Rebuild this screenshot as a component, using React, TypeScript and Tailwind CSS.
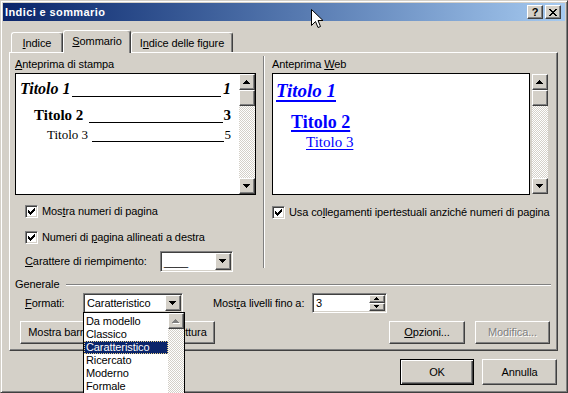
import React from "react"

const raised =
  "bg-[#d4d0c8] border border-t-white border-l-white border-r-[#404040] border-b-[#404040] shadow-[inset_-1px_-1px_#808080]"
const sunken =
  "border border-t-[#808080] border-l-[#808080] border-r-white border-b-white shadow-[inset_1px_1px_#404040,inset_-1px_-1px_#d4d0c8]"
const checker =
  "bg-[image:repeating-conic-gradient(#d4d0c8_0_25%,#ffffff_0_50%)] bg-[length:2px_2px]"

function Arrow({ dir, w = 7, color = "#000", ghost = false }: { dir: "up" | "down"; w?: number; color?: string; ghost?: boolean }) {
  const rows: number[] = []
  for (let x = 1; x <= w; x += 2) rows.push(x)
  const r = dir === "up" ? rows : [...rows].reverse()
  const h = rows.length
  return (
    <svg width={w + 1} height={h + 1} viewBox={`0 0 ${w + 1} ${h + 1}`} shapeRendering="crispEdges">
      {ghost &&
        r.map((rw, i) => <rect key={"g" + i} x={(w - rw) / 2 + 1} y={i + 1} width={rw} height={1} fill="#fff" />)}
      {r.map((rw, i) => (
        <rect key={i} x={(w - rw) / 2} y={i} width={rw} height={1} fill={color} />
      ))}
    </svg>
  )
}

function VScroll({ className = "", thumb = true, upDisabled = false }: { className?: string; thumb?: boolean; upDisabled?: boolean }) {
  return (
    <div className={`flex flex-col w-[16px] shrink-0 ${className}`}>
      <div className={`${raised} h-[16px] shrink-0 flex items-center justify-center`}>
        {upDisabled ? <Arrow dir="up" color="#808080" ghost /> : <Arrow dir="up" />}
      </div>
      {thumb && <div className={`${raised} h-[16px] shrink-0`} />}
      <div className={`flex-1 ${checker}`} />
      <div className={`${raised} h-[16px] shrink-0 flex items-center justify-center`}>
        <Arrow dir="down" />
      </div>
    </div>
  )
}

const checkPixels: [number, number, number][] = [
  [6, 0, 1],
  [5, 1, 2],
  [0, 2, 1],
  [4, 2, 3],
  [0, 3, 2],
  [3, 3, 3],
  [0, 4, 5],
  [1, 5, 3],
  [2, 6, 1],
]

function Check() {
  return (
    <div className={`w-[13px] h-[13px] shrink-0 bg-white ${sunken} flex items-center justify-center`}>
      <svg width="7" height="7" viewBox="0 0 7 7" shapeRendering="crispEdges">
        {checkPixels.map(([x, y, w], i) => (
          <rect key={i} x={x} y={y} width={w} height={1} fill="#000" />
        ))}
      </svg>
    </div>
  )
}

function Combo({ className = "", children }: { className?: string; children: React.ReactNode }) {
  return (
    <div className={`${sunken} bg-white flex p-[1px] shrink-0 ${className}`}>
      <div className="flex-1 pl-[2px] flex items-center whitespace-nowrap">{children}</div>
      <div className={`${raised} w-[16px] flex items-center justify-center`}>
        <Arrow dir="down" />
      </div>
    </div>
  )
}

function Btn({
  className = "",
  children,
  disabled = false,
  isDefault = false,
}: {
  className?: string
  children: React.ReactNode
  disabled?: boolean
  isDefault?: boolean
}) {
  const frame = isDefault
    ? "bg-[#d4d0c8] border border-black shadow-[inset_1px_1px_#fff,inset_-1px_-1px_#404040,inset_-2px_-2px_#808080]"
    : raised
  return (
    <div
      className={`${frame} flex items-center justify-center whitespace-nowrap shrink-0 ${
        disabled ? "text-[#808080] [text-shadow:1px_1px_#fff]" : ""
      } ${className}`}
    >
      {children}
    </div>
  )
}

function Tab({ className = "", active = false, children }: { className?: string; active?: boolean; children: React.ReactNode }) {
  return (
    <div
      className={`${className} bg-[#d4d0c8] flex items-center justify-center rounded-t-[3px] border-t border-l border-r border-t-white border-l-white border-r-[#404040] shadow-[inset_-1px_0_#808080] ${
        active ? "h-[23px] -mb-px pb-[1px]" : "h-[20px] pt-[1px]"
      }`}
    >
      {children}
    </div>
  )
}

function TocRow({
  label,
  num,
  className = "",
  lead = "",
}: {
  label: string
  num: string
  className?: string
  lead?: string
}) {
  return (
    <div className={`flex items-baseline whitespace-nowrap ${className}`}>
      <span>{label}</span>
      <span className={`flex-1 relative top-[3px] border-b border-black ${lead}`} />
      <span>{num}</span>
    </div>
  )
}

const xPixels: [number, number, number][] = [
  [0, 0, 2],
  [6, 0, 2],
  [1, 1, 2],
  [5, 1, 2],
  [2, 2, 4],
  [3, 3, 2],
  [2, 4, 4],
  [1, 5, 2],
  [5, 5, 2],
  [0, 6, 2],
  [6, 6, 2],
]

export default function App() {
  return (
    <div className="relative w-[568px] h-[393px] overflow-hidden bg-[#d4d0c8] font-['Liberation_Sans',Arial,sans-serif] text-[11px] leading-[13px] tracking-[-0.1px] text-black">
      <div className="w-full h-full border border-t-[#d4d0c8] border-l-[#d4d0c8] border-r-[#404040] border-b-[#404040] shadow-[inset_1px_1px_#fff,inset_-1px_-1px_#808080] p-[2px] flex flex-col">
        {/* title bar */}
        <div className="h-[18px] shrink-0 flex items-center bg-gradient-to-r from-[#0a246a] to-[#a6caf0]">
          <span className="pl-[2px] text-white font-bold tracking-[0.4px]">Indici e sommario</span>
          <div className="ml-auto mr-[4px] flex gap-[2px]">
            <div className={`${raised} w-[16px] h-[14px] flex items-center justify-center font-bold text-[11px] leading-none tracking-normal`}>
              ?
            </div>
            <div className={`${raised} w-[16px] h-[14px] flex items-center justify-center`}>
              <svg width="8" height="7" viewBox="0 0 8 7" shapeRendering="crispEdges">
                {xPixels.map(([x, y, w], i) => (
                  <rect key={i} x={x} y={y} width={w} height={1} fill="#000" />
                ))}
              </svg>
            </div>
          </div>
        </div>

        {/* tabs */}
        <div className="mt-[9px] ml-[8px] h-[22px] shrink-0 flex items-end relative z-10">
          <Tab className="w-[52px]">
            <u>I</u>ndice
          </Tab>
          <Tab className="w-[68px]" active>
            <u>S</u>ommario
          </Tab>
          <Tab className="w-[102px]">
            I<u>n</u>dice delle figure
          </Tab>
        </div>

        {/* tab panel */}
        <div className="ml-[6px] w-[549px] h-[299px] shrink-0 border border-t-white border-l-white border-r-[#404040] border-b-[#404040] shadow-[inset_-1px_-1px_#808080]">
          <div className="flex items-start h-[215px] pt-[3px]">
            {/* print preview column */}
            <div className="w-[253px] shrink-0 pl-[5px] pt-[2px]">
              <div className="h-[13px]">
                <u>A</u>nteprima di stampa
              </div>
              <div className="mt-[2px] w-[241px] h-[122px] border border-black bg-white flex">
                <div className="flex-1 pt-[6px] pl-[4px] pr-[8px] font-['Liberation_Serif',serif] tracking-normal">
                  <TocRow
                    label="Titolo 1"
                    num="1"
                    className="text-[16px] leading-[18px] font-bold italic"
                    lead="ml-[1px] mr-[2px]"
                  />
                  <TocRow
                    label="Titolo 2"
                    num="3"
                    className="mt-[9px] pl-[14px] text-[15px] leading-[17px] font-bold"
                    lead="ml-[6px] mr-[1px]"
                  />
                  <TocRow
                    label="Titolo 3"
                    num="5"
                    className="mt-[3px] pl-[27px] text-[13px] leading-[15px]"
                    lead="ml-[4px] mr-[1px]"
                  />
                </div>
                <VScroll />
              </div>

              <div className="mt-[10px] ml-[10px] h-[13px] flex items-center gap-[4px]">
                <Check />
                <span>
                  Mos<u>t</u>ra numeri di pagina
                </span>
              </div>
              <div className="mt-[13px] ml-[10px] h-[13px] flex items-center gap-[4px]">
                <Check />
                <span>
                  Numeri di <u>p</u>agina allineati a destra
                </span>
              </div>
              <div className="mt-[7px] ml-[10px] h-[21px] flex items-center">
                <span className="w-[135px] shrink-0">
                  <u>C</u>arattere di riempimento:
                </span>
                <Combo className="w-[73px] h-[21px]">
                  <span className="pt-[2px]">____</span>
                </Combo>
              </div>
            </div>

            {/* separator */}
            <div className="w-[2px] h-[212px] shrink-0 border-l border-l-[#808080] border-r border-r-white" />

            {/* web preview column */}
            <div className="pl-[7px] pt-[2px]">
              <div className="h-[13px]">
                Anteprima <u>W</u>eb
              </div>
              <div className="mt-[2px] flex items-start">
                <div className="w-[258px] h-[122px] border border-black bg-white pt-[6px] font-['Liberation_Serif',serif] tracking-normal text-[#0000ff]">
                  <div className="pl-[3px] text-[19px] leading-[22px] font-bold italic">
                    <span className="underline decoration-2 underline-offset-[3px]">Titolo 1</span>
                  </div>
                  <div className="mt-[10px] pl-[18px] text-[18px] leading-[21px] font-bold">
                    <span className="underline decoration-2 underline-offset-[2px]">Titolo 2</span>
                  </div>
                  <div className="mt-[1px] pl-[33px] text-[15px] leading-[17px]">
                    <span className="underline decoration-1 underline-offset-[2px]">Titolo 3</span>
                  </div>
                </div>
                <VScroll className="ml-[2px] mt-[1px] h-[120px]" />
              </div>
              <div className="mt-[11px] h-[13px] flex items-center gap-[4px] whitespace-nowrap">
                <Check />
                <span>
                  Usa co<u>l</u>legamenti ipertestuali anziché numeri di pagina
                </span>
              </div>
            </div>
          </div>

          {/* Generale */}
          <div className="mt-[10px] pl-[5px] pr-[6px] h-[13px] flex items-center">
            <span>Generale</span>
            <div className="flex-1 ml-[7px] h-[2px] border-t border-t-[#808080] border-b border-b-white" />
          </div>

          <div className="mt-[2px] pl-[15px] h-[20px] flex items-center">
            <span className="w-[58px] shrink-0">
              <u>F</u>ormati:
            </span>
            <Combo className="w-[100px] h-[20px]">Caratteristico</Combo>
            <span className="ml-[30px] w-[99px] shrink-0 whitespace-nowrap">
              Most<u>r</u>a livelli fino a:
            </span>
            <div className={`${sunken} bg-white w-[75px] h-[20px] flex p-[1px] shrink-0`}>
              <span className="flex-1 pl-[2px] leading-[16px]">3</span>
              <div className="flex flex-col w-[16px]">
                <div className={`${raised} flex-1 flex items-center justify-center`}>
                  <Arrow dir="up" w={5} />
                </div>
                <div className={`${raised} flex-1 flex items-center justify-center`}>
                  <Arrow dir="down" w={5} />
                </div>
              </div>
            </div>
          </div>

          <div className="mt-[8px] pl-[10px] pr-[7px] h-[23px] flex">
            <Btn className="w-[195px]">Mostra barra degli strumenti Struttura</Btn>
            <Btn className="ml-auto w-[76px]">
              <span>
                <u>O</u>pzioni...
              </span>
            </Btn>
            <Btn className="ml-[10px] w-[75px]" disabled>
              Modifica...
            </Btn>
          </div>
        </div>

        {/* dialog buttons */}
        <div className="mt-[8px] pr-[8px] flex justify-end gap-[8px]">
          <Btn className="w-[74px] h-[26px]" isDefault>
            OK
          </Btn>
          <Btn className="w-[75px] h-[26px]">Annulla</Btn>
        </div>
      </div>

      {/* open dropdown list */}
      <div className="absolute left-[83px] top-[312px] w-[102px] h-[112px] border border-black bg-white flex">
        <div className="flex-1 pt-[2px]">
          {["Da modello", "Classico", "Caratteristico", "Ricercato", "Moderno", "Formale", "Semplice"].map((t) => (
            <div
              key={t}
              className={`h-[13px] leading-[13px] pl-[2px] whitespace-nowrap ${
                t === "Caratteristico"
                  ? "bg-[#0a246a] text-white outline-1 outline-dotted outline-[#e8d088] -outline-offset-1"
                  : ""
              }`}
            >
              {t}
            </div>
          ))}
        </div>
        <VScroll thumb={false} upDisabled />
      </div>

      {/* mouse pointer */}
      <svg className="absolute left-[311px] top-[9px]" width="13" height="20" viewBox="0 0 13 20">
        <path
          d="M0.5 0.5 V16.5 L4.5 12.5 L7 18.5 L9.5 17.5 L7 11.5 H12 Z"
          fill="#fff"
          stroke="#000"
          strokeWidth="1"
          strokeLinejoin="miter"
        />
      </svg>
    </div>
  )
}
